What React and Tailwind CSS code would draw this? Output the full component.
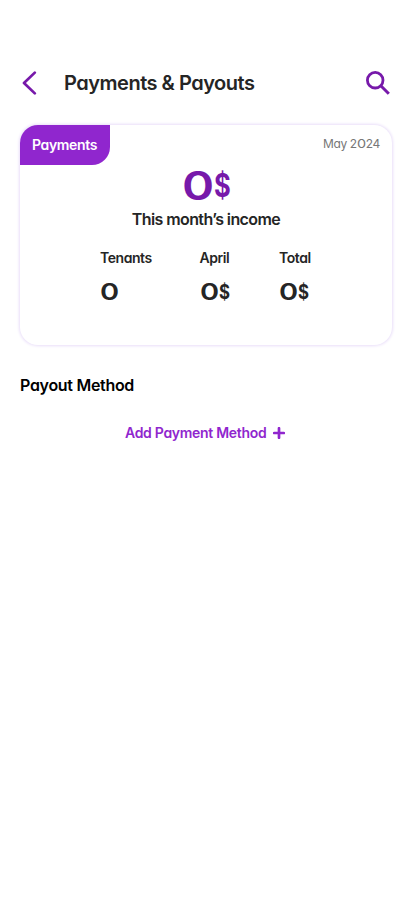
function Zero({ className }) {
  return <span className={"inline-block origin-left " + className}>0</span>;
}

function Stat({ label, dollars, className }) {
  return (
    <div className={className}>
      <div className="whitespace-nowrap text-[14px] leading-5 font-semibold tracking-[-0.45px]">{label}</div>
      <div className="mt-[9px] flex h-[30px] items-center text-[23px] leading-[30px] font-semibold">
        <Zero className="w-[19px] scale-x-[1.26]" />
        {dollars && <span className="inline-block origin-left scale-x-[0.84] text-[20px] font-bold">$</span>}
      </div>
    </div>
  );
}

export default function App() {
  return (
    <main className="h-[917px] w-full overflow-hidden bg-white pt-[63px] font-['Inter','Liberation_Sans',sans-serif] text-[#252525] [font-feature-settings:'cv11']">
      <header className="flex h-10 items-center pr-[22px] pl-[22px]">
        <svg width="15" height="24" viewBox="0 0 15 24" fill="none" stroke="#7719aa" strokeWidth="2.7" strokeLinecap="round" strokeLinejoin="round" aria-label="Back">
          <path d="M12.8 1.6 2 12l10.8 10.4" />
        </svg>
        <h1 className="ml-[27px] flex-1 whitespace-nowrap text-[20px] leading-7 font-semibold tracking-[-0.49px]">Payments &amp; Payouts</h1>
        <svg width="24" height="24" viewBox="0 0 24 24" fill="none" stroke="#7719aa" strokeWidth="2.8" aria-label="Search">
          <circle cx="9.2" cy="9.2" r="7.8" />
          <path d="m14.8 14.8 8 8" strokeWidth="3" />
        </svg>
      </header>

      <section className="mx-5 mt-[22px] h-[220px] rounded-[18px] bg-white shadow-[0_0_3px_1px_#e9def9]">
        <div className="flex h-10 items-start justify-between">
          <div className="flex h-10 w-[90px] items-center justify-center rounded-tl-[18px] rounded-br-[18px] bg-[#9026ce] pr-px pb-px text-[14px] font-semibold tracking-[-0.35px] text-white">Payments</div>
          <div className="mt-[10px] mr-3 text-[12px] leading-[18px] tracking-[-0.35px] text-[#777777]">
            May 2<Zero className="w-[9px] scale-x-[1.2]" />24
          </div>
        </div>
        <div className="flex h-[42px] items-center pl-[161.5px] text-[40px] leading-[42px] font-semibold text-[#7719aa]">
          <Zero className="w-[32px] scale-x-[1.22]" />
          <span className="inline-block origin-left scale-x-[0.8] text-[32px] font-bold">$</span>
        </div>
        <div className="text-center text-[16px] leading-6 font-semibold tracking-[-0.6px]">This month’s income</div>
        <div className="mt-[17px] flex pl-20">
          <Stat label="Tenants" className="w-[99.5px]" />
          <Stat label="April" dollars className="w-[79.5px]" />
          <Stat label="Total" dollars className="w-20" />
        </div>
      </section>

      <h2 className="mt-7 ml-5 text-[16px] leading-6 font-semibold tracking-[-0.3px] text-black">Payout Method</h2>
      <button className="mt-[25px] ml-[125px] flex h-5 items-center gap-[7px] whitespace-nowrap text-[14px] font-semibold tracking-[-0.3px] text-[#9026ce]">
        Add Payment Method
        <svg className="mt-px" width="12" height="12" viewBox="0 0 12 12" fill="none" stroke="currentColor" strokeWidth="2.7" strokeLinecap="round">
          <path d="M6 1.2v9.6M1.2 6h9.6" />
        </svg>
      </button>
    </main>
  );
}
